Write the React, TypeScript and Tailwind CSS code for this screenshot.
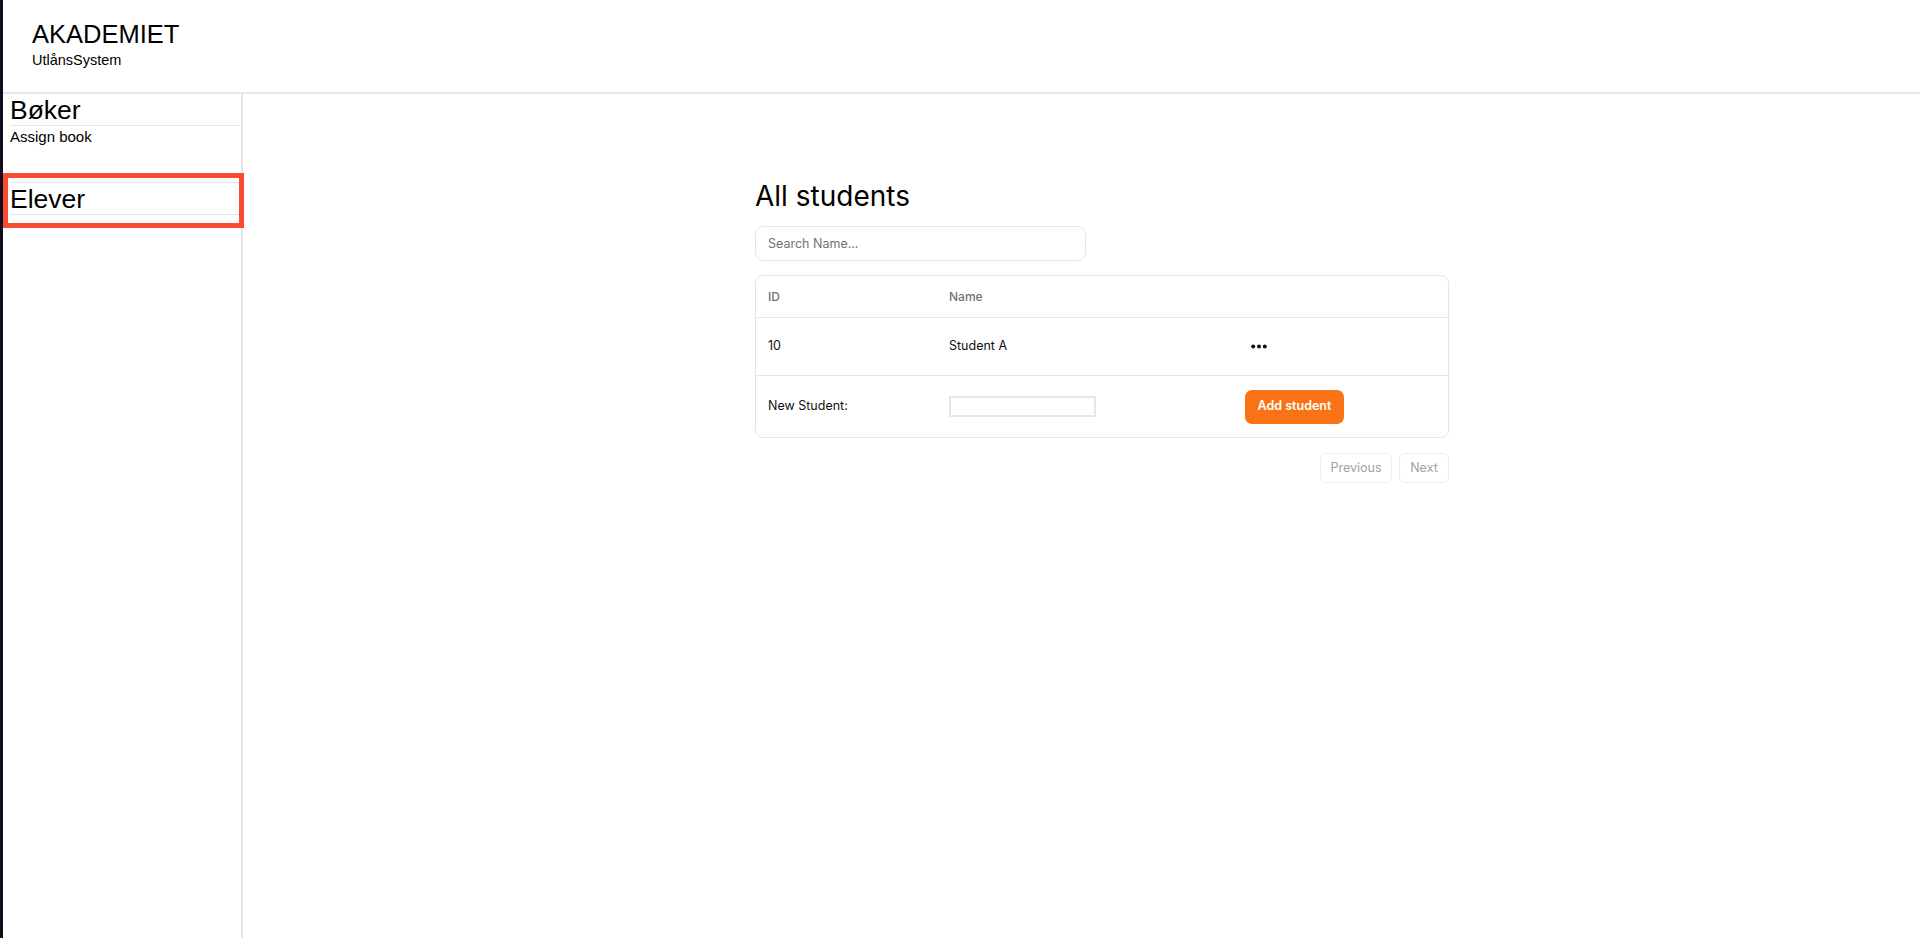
import React from "react";

const students = [{ id: 10, name: "Student A" }];

function Dots() {
  return (
    <svg width="16" height="5" viewBox="0 0 16 5" className="block">
      <circle cx="2.2" cy="2.5" r="2" fill="#111" />
      <circle cx="8" cy="2.5" r="2" fill="#111" />
      <circle cx="13.8" cy="2.5" r="2" fill="#111" />
    </svg>
  );
}

function Sidebar() {
  return (
    <aside className="w-[240px] shrink-0 border-r-2 border-[#e2e8f0] pl-[7px] font-['Liberation_Sans',Arial,sans-serif] text-black">
      <div className="border-b border-[#e6e6e6] pt-px text-[26.5px] leading-[30px]">Bøker</div>
      <div className="pt-px text-[15px] leading-[20px]">Assign book</div>

      <div className="relative mt-[35px]">
        <div className="border-y border-[#e4e4e4] pt-px text-[26.5px] leading-[30px]">Elever</div>
        <span className="pointer-events-none absolute -left-[7px] -right-[3px] -top-[9px] -bottom-[13px] border-[5px] border-[#f94b2d]" />
      </div>
    </aside>
  );
}

function StudentsTable() {
  return (
    <div className="rounded-lg border border-[#e5e5e5] text-[12.5px]">
      <div className="grid h-[42px] grid-cols-[181px_296px_1fr] items-center border-b border-[#e5e5e5] text-[12px] font-medium text-[#71717a]">
        <div className="px-3">ID</div>
        <div className="px-3">Name</div>
        <div className="px-3" />
      </div>
      {students.map((s) => (
        <div
          key={s.id}
          className="grid h-[58px] grid-cols-[181px_296px_1fr] items-center border-b border-[#e5e5e5] text-[#111]"
        >
          <div className="px-3">{s.id}</div>
          <div className="px-3">{s.name}</div>
          <div className="px-3">
            <button className="ml-[6px] flex h-[28px] items-center">
              <Dots />
            </button>
          </div>
        </div>
      ))}
      <div className="grid h-[61px] grid-cols-[181px_296px_1fr] items-center text-[#111]">
        <div className="px-3">New Student:</div>
        <div className="px-3">
          <input className="block h-[21px] w-[147px] border-2 border-[#e5e7eb] outline-none" />
        </div>
        <div className="px-3">
          <button className="h-[34px] w-[99px] rounded-[7px] bg-[#f97316] text-[12.5px] font-semibold text-white">
            Add student
          </button>
        </div>
      </div>
    </div>
  );
}

export default function App() {
  return (
    <div className="flex h-[938px] w-full overflow-hidden bg-white">
      <div className="w-[3px] shrink-0 bg-[#130c1f]" />
      <div className="flex min-w-0 flex-1 flex-col">
        <header className="h-[94px] shrink-0 border-b-2 border-[#e8e8e8] pl-[29px] pt-[19px] font-['Liberation_Sans',Arial,sans-serif] text-black">
          <div className="text-[25.5px] leading-[31px]">AKADEMIET</div>
          <div className="text-[14.5px] leading-[20px]">UtlånsSystem</div>
        </header>

        <div className="flex flex-1">
          <Sidebar />

          <main className="flex-1 pl-[512px] pt-[84px] font-['Inter',sans-serif]">
            <div className="w-[694px]">
              <h1 className="text-[28px] leading-[36px] text-black">All students</h1>

              <input
                placeholder="Search Name..."
                className="mt-[12px] block h-[35px] w-[331px] rounded-[9px] border border-[#e5e5e5] px-3 text-[12.5px] outline-none placeholder:text-[#71717a]"
              />

              <div className="mt-[14px]">
                <StudentsTable />
              </div>

              <div className="mt-[15px] flex justify-end gap-[7px] text-[12.5px] text-[#a1a1aa]">
                <button className="h-[30px] w-[72px] rounded-md border border-[#efefef]">Previous</button>
                <button className="h-[30px] w-[50px] rounded-md border border-[#efefef]">Next</button>
              </div>
            </div>
          </main>
        </div>
      </div>
    </div>
  );
}
